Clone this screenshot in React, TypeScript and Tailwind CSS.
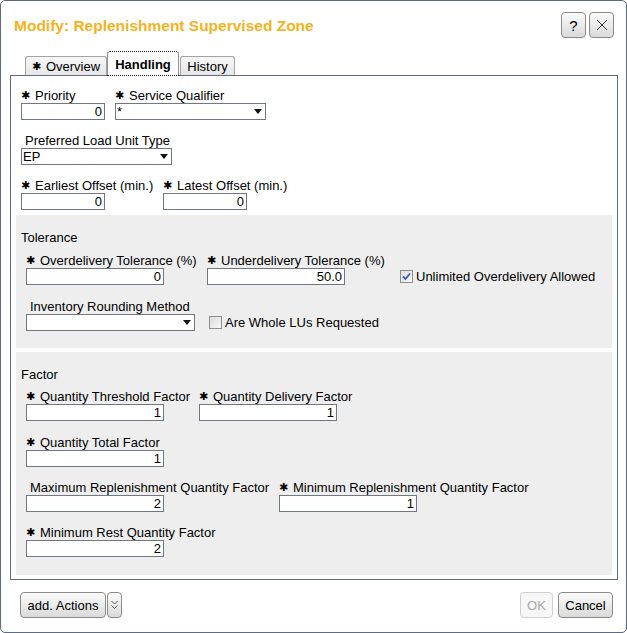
import React from "react";

const Star = () => (
  <span className="inline-block w-[14px] text-[11px] leading-[15px] align-top font-['DejaVu_Sans',sans-serif]">
    ✱
  </span>
);

function Label({ req, children }: { req?: boolean; children: React.ReactNode }) {
  return (
    <div className="h-[15px] leading-[15px] whitespace-nowrap">
      {req ? <Star /> : <span className="inline-block w-[4px]" />}
      {children}
    </div>
  );
}

function Field({ w, value }: { w: number; value: string }) {
  return (
    <input
      readOnly
      value={value}
      style={{ width: w }}
      className="block h-[17px] border border-[#6f7785] bg-white text-right pr-[2px] text-[13px] leading-[15px] outline-none"
    />
  );
}

function Select({ w, value }: { w: number; value?: string }) {
  return (
    <div
      style={{ width: w }}
      className="flex h-[17px] items-center justify-between border border-[#6f7785] bg-white pl-[1px] pr-[3px] leading-[15px]"
    >
      <span>{value ?? ""}</span>
      <svg width="8" height="5" viewBox="0 0 8 5">
        <path d="M0 0H8L4 5Z" fill="#111" />
      </svg>
    </div>
  );
}

function Check({ checked, label }: { checked?: boolean; label: string }) {
  return (
    <div className="flex h-[17px] items-center gap-[3px] whitespace-nowrap">
      <span className="flex h-[13px] w-[13px] items-center justify-center border border-[#8e8f8f] bg-gradient-to-br from-[#dcdcdc] to-[#f8f8f8]">
        {checked && (
          <svg width="9" height="9" viewBox="0 0 9 9">
            <path d="M1 4.5L3.5 7L8 1.5" stroke="#3d56b8" strokeWidth="1.8" fill="none" />
          </svg>
        )}
      </span>
      <span>{label}</span>
    </div>
  );
}

function Btn({ children, className = "" }: { children: React.ReactNode; className?: string }) {
  return (
    <div
      className={
        "flex h-[26px] items-center justify-center rounded-[4px] border border-[#8a8a8a] bg-gradient-to-b from-[#fbfbfb] to-[#dadada] " +
        className
      }
    >
      {children}
    </div>
  );
}

export default function App() {
  return (
    <div className="flex h-[633px] w-[627px] flex-col rounded-[5px] border border-[#5e6a80] bg-white font-['Liberation_Sans',Arial,sans-serif] text-[13px] leading-[15px] text-black">
      {/* header */}
      <div className="flex h-[50px] shrink-0 items-start justify-between">
        <div className="ml-[13px] mt-[16px] text-[15.5px] font-bold leading-[18px] text-[#f6b21c]">
          Modify: Replenishment Supervised Zone
        </div>
        <div className="mr-[12px] mt-[11px] flex gap-[3px]">
          <Btn className="w-[25px] rounded-[3px] text-[15px]">?</Btn>
          <Btn className="w-[25px] rounded-[3px]">
            <svg width="12" height="12" viewBox="0 0 12 12">
              <path d="M1 1L11 11M11 1L1 11" stroke="#333" strokeWidth="1" />
            </svg>
          </Btn>
        </div>
      </div>

      {/* tabs */}
      <div className="flex h-[24px] shrink-0 items-end pl-[24px]">
        <div className="flex h-[19px] w-[82px] items-center justify-center rounded-t-[3px] border border-b-0 border-[#a3a3a3] bg-gradient-to-b from-[#f7f7f7] to-[#e6e6e6]">
          <Star />
          Overview
        </div>
        <div className="relative z-10 -mb-px flex h-[25px] w-[72px] items-center justify-center rounded-t-[3px] border border-dotted border-[#222] bg-white pt-[2px] font-bold">
          Handling
        </div>
        <div className="ml-px flex h-[19px] w-[55px] items-center justify-center rounded-t-[3px] border border-b-0 border-[#a3a3a3] bg-gradient-to-b from-[#f7f7f7] to-[#e6e6e6]">
          History
        </div>
      </div>

      {/* panel */}
      <div className="ml-[9px] mr-[8px] shrink-0 border border-[#5e6a80] px-[5px] pb-[4px] pt-[12px]">
        <div className="pl-[5px]">
          <div className="flex">
            <div className="w-[94px]">
              <Label req>Priority</Label>
              <Field w={84} value="0" />
            </div>
            <div>
              <Label req>Service Qualifier</Label>
              <Select w={151} value="*" />
            </div>
          </div>
          <div className="mt-[13px]">
            <Label>Preferred Load Unit Type</Label>
            <Select w={151} value="EP" />
          </div>
          <div className="mt-[13px] flex">
            <div className="w-[142px]">
              <Label req>Earliest Offset (min.)</Label>
              <Field w={84} value="0" />
            </div>
            <div>
              <Label req>Latest Offset (min.)</Label>
              <Field w={84} value="0" />
            </div>
          </div>
        </div>

        {/* Tolerance */}
        <div className="mt-[5px] bg-[#eeeeee] pb-[17px] pl-[5px] pt-[15px]">
          <div className="h-[15px]">Tolerance</div>
          <div className="mt-[8px] flex pl-[5px]">
            <div className="w-[181px]">
              <Label req>Overdelivery Tolerance (%)</Label>
              <Field w={138} value="0" />
            </div>
            <div className="w-[193px]">
              <Label req>Underdelivery Tolerance (%)</Label>
              <Field w={138} value="50.0" />
            </div>
            <div className="pt-[15px]">
              <Check checked label="Unlimited Overdelivery Allowed" />
            </div>
          </div>
          <div className="mt-[14px] flex pl-[5px]">
            <div className="w-[183px]">
              <Label>Inventory Rounding Method</Label>
              <Select w={169} />
            </div>
            <div className="pt-[15px]">
              <Check label="Are Whole LUs Requested" />
            </div>
          </div>
        </div>

        {/* Factor */}
        <div className="mt-[4px] bg-[#eeeeee] pb-[18px] pl-[5px] pt-[15px]">
          <div className="h-[15px]">Factor</div>
          <div className="mt-[7px] flex pl-[5px]">
            <div className="w-[173px]">
              <Label req>Quantity Threshold Factor</Label>
              <Field w={138} value="1" />
            </div>
            <div>
              <Label req>Quantity Delivery Factor</Label>
              <Field w={138} value="1" />
            </div>
          </div>
          <div className="mt-[14px] pl-[5px]">
            <Label req>Quantity Total Factor</Label>
            <Field w={138} value="1" />
          </div>
          <div className="mt-[13px] flex pl-[5px]">
            <div className="w-[253px]">
              <Label>Maximum Replenishment Quantity Factor</Label>
              <Field w={138} value="2" />
            </div>
            <div>
              <Label req>Minimum Replenishment Quantity Factor</Label>
              <Field w={138} value="1" />
            </div>
          </div>
          <div className="mt-[13px] pl-[5px]">
            <Label req>Minimum Rest Quantity Factor</Label>
            <Field w={138} value="2" />
          </div>
        </div>
      </div>

      {/* footer */}
      <div className="flex items-start justify-between pl-[19px] pr-[13px] pt-[12px]">
        <div className="flex gap-px">
          <Btn className="w-[86px]">add. Actions</Btn>
          <Btn className="w-[15px] rounded-[3px]">
            <svg width="9" height="12" viewBox="0 0 9 12">
              <path d="M1.5 2L4.5 5L7.5 2M1.5 6.5L4.5 9.5L7.5 6.5" stroke="#555" strokeWidth="1" fill="none" />
            </svg>
          </Btn>
        </div>
        <div className="flex gap-[5px]">
          <div className="flex h-[26px] w-[33px] items-center justify-center rounded-[4px] border border-[#cfcfcf] bg-[#f6f6f6] text-[#a8a8a8]">
            OK
          </div>
          <Btn className="w-[55px]">Cancel</Btn>
        </div>
      </div>
    </div>
  );
}
